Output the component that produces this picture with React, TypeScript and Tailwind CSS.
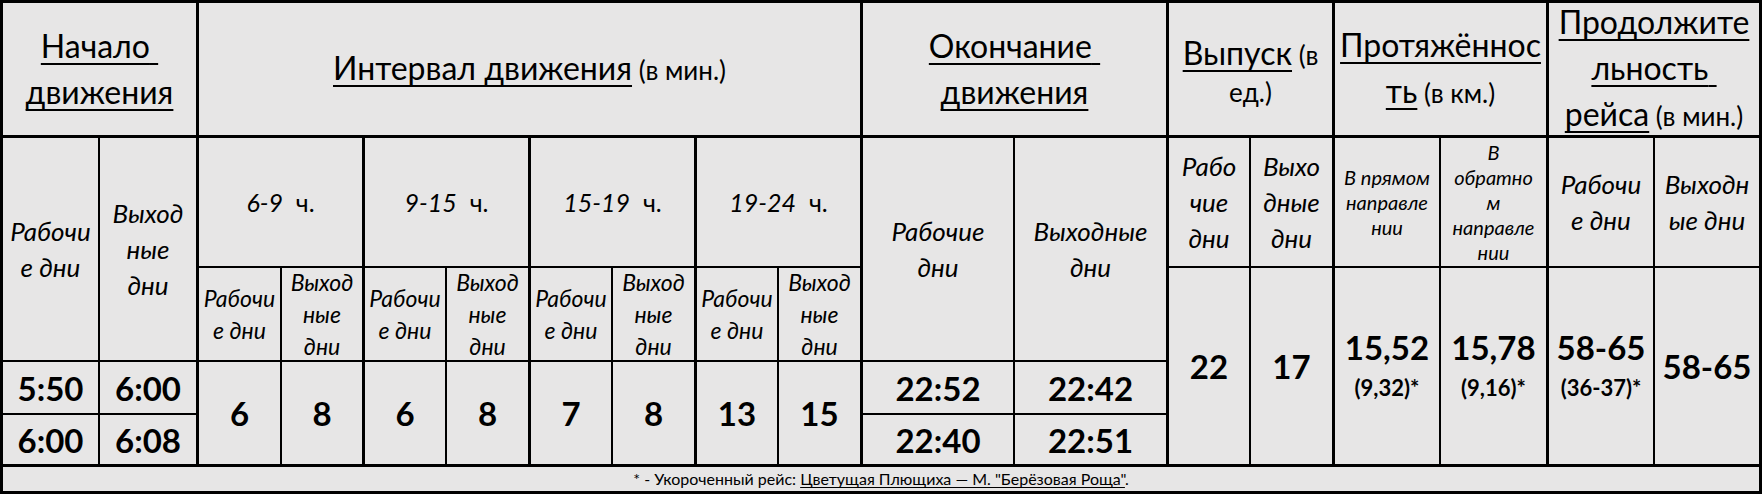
import type { ReactNode } from 'react';

function Cell({ className = '', children }: { className?: string; children?: ReactNode }) {
  return (
    <div className={`flex flex-col items-center justify-center text-center border-black overflow-visible ${className}`}>
      {children}
    </div>
  );
}

const u = 'underline decoration-2 underline-offset-[5px] [text-decoration-skip-ink:none]';

function Head({ lines }: { lines: ReactNode[] }) {
  return (
    <>
      {lines.map((l, i) => (
        <span key={i} className="block text-[32px] leading-[46px] whitespace-pre">
          {l}
        </span>
      ))}
    </>
  );
}

function Sub({ lines, size = 'big' }: { lines: string[]; size?: 'big' | 'mid' | 'small' }) {
  const cls =
    size === 'big'
      ? 'text-[26px] leading-[36px]'
      : size === 'mid'
      ? 'text-[23px] leading-[32px]'
      : 'text-[20px] leading-[25px]';
  return (
    <div className={`italic ${cls}`}>
      {lines.map((l, i) => (
        <span key={i} className="block whitespace-pre">
          {l}
        </span>
      ))}
    </div>
  );
}

function Num({ children }: { children: ReactNode }) {
  return <span className="block text-[33px] font-bold leading-[38px]">{children}</span>;
}

function Note({ children }: { children: ReactNode }) {
  return <span className="block mt-[6px] text-[22px] font-bold leading-[32px]">{children}</span>;
}

function Hours({ range }: { range: string }) {
  return (
    <span className="text-[25px] leading-[30px] whitespace-pre">
      <i>{range}</i>
      {'\u00a0\u00a0'}ч.
    </span>
  );
}

export default function App() {
  const intervals = ['6', '8', '6', '8', '7', '8', '13', '15'];
  const intervalStarts = [
    'col-start-3',
    'col-start-4',
    'col-start-5',
    'col-start-6',
    'col-start-7',
    'col-start-8',
    'col-start-9',
    'col-start-10',
  ];

  return (
    <div className="w-[1762px] h-[494px] bg-white">
      <div className="grid grid-cols-[97px_99px_83px_83px_82px_84px_82px_84px_82px_84px_152px_154px_82px_84px_106px_108px_106px_107px] grid-rows-[135px_130px_94px_53px_52px_27px] border-l-[3px] border-t-[3px] border-black bg-[#e7e6e6] text-black font-['Lato',sans-serif]">
        {/* row 1: group headers */}
        <Cell className="col-start-1 col-span-2 row-start-1 border-r-[3px] border-b-[3px]">
          <Head lines={[<span className={u}>Начало{'\u00a0'}</span>, <span className={u}>движения</span>]} />
        </Cell>
        <Cell className="col-start-3 col-span-8 row-start-1 border-r-[3px] border-b-[3px]">
          <span className="block text-[32px] leading-[46px] whitespace-pre">
            <span className={u}>Интервал движения</span>
            <span className="text-[26px]"> (в мин.)</span>
          </span>
        </Cell>
        <Cell className="col-start-11 col-span-2 row-start-1 border-r-[3px] border-b-[3px]">
          <Head lines={[<span className={u}>Окончание{'\u00a0'}</span>, <span className={u}>движения</span>]} />
        </Cell>
        <Cell className="col-start-13 col-span-2 row-start-1 border-r-[3px] border-b-[3px]">
          <span className="block text-[32px] leading-[44px] whitespace-pre">
            <span className={u}>Выпуск</span>
            <span className="text-[26px]"> (в</span>
          </span>
          <span className="block text-[26px] leading-[30px]">ед.)</span>
        </Cell>
        <Cell className="col-start-15 col-span-2 row-start-1 border-r-[3px] border-b-[3px]">
          <Head
            lines={[
              <span className={u}>Протяжённос</span>,
              <>
                <span className={u}>ть</span>
                <span className="text-[26px]"> (в км.)</span>
              </>,
            ]}
          />
        </Cell>
        <Cell className="col-start-17 col-span-2 row-start-1 border-r-[3px] border-b-[3px]">
          <Head
            lines={[
              <span className={u}>Продолжите</span>,
              <span className={u}>льность{'\u00a0'}</span>,
              <>
                <span className={u}>рейса</span>
                <span className="text-[26px]"> (в мин.)</span>
              </>,
            ]}
          />
        </Cell>

        {/* row 2: sub headers */}
        <Cell className="col-start-1 row-start-2 row-span-2 border-r-2 border-b-2">
          <Sub lines={['Рабочи', 'е дни']} />
        </Cell>
        <Cell className="col-start-2 row-start-2 row-span-2 border-r-[3px] border-b-2">
          <Sub lines={['Выход', 'ные', 'дни']} />
        </Cell>
        <Cell className="col-start-3 col-span-2 row-start-2 border-r-[3px] border-b-2">
          <Hours range="6-9" />
        </Cell>
        <Cell className="col-start-5 col-span-2 row-start-2 border-r-[3px] border-b-2">
          <Hours range="9-15" />
        </Cell>
        <Cell className="col-start-7 col-span-2 row-start-2 border-r-[3px] border-b-2">
          <Hours range="15-19" />
        </Cell>
        <Cell className="col-start-9 col-span-2 row-start-2 border-r-[3px] border-b-2">
          <Hours range="19-24" />
        </Cell>
        <Cell className="col-start-11 row-start-2 row-span-2 border-r-2 border-b-2">
          <Sub lines={['Рабочие', 'дни']} />
        </Cell>
        <Cell className="col-start-12 row-start-2 row-span-2 border-r-[3px] border-b-2">
          <Sub lines={['Выходные', 'дни']} />
        </Cell>
        <Cell className="col-start-13 row-start-2 border-r-2 border-b-2">
          <Sub lines={['Рабо', 'чие', 'дни']} />
        </Cell>
        <Cell className="col-start-14 row-start-2 border-r-[3px] border-b-2">
          <Sub lines={['Выхо', 'дные', 'дни']} />
        </Cell>
        <Cell className="col-start-15 row-start-2 border-r-2 border-b-2">
          <Sub size="small" lines={['В прямом', 'направле', 'нии']} />
        </Cell>
        <Cell className="col-start-16 row-start-2 border-r-[3px] border-b-2">
          <Sub size="small" lines={['В', 'обратно', 'м', 'направле', 'нии']} />
        </Cell>
        <Cell className="col-start-17 row-start-2 border-r-2 border-b-2">
          <Sub lines={['Рабочи', 'е дни']} />
        </Cell>
        <Cell className="col-start-18 row-start-2 border-r-[3px] border-b-2">
          <Sub lines={['Выходн', 'ые дни']} />
        </Cell>

        {/* row 3: interval day types */}
        {intervalStarts.map((c, i) => (
          <Cell
            key={c}
            className={`${c} row-start-3 border-b-2 ${i % 2 === 0 ? 'border-r-2' : 'border-r-[3px]'}`}
          >
            <Sub size="mid" lines={i % 2 === 0 ? ['Рабочи', 'е дни'] : ['Выход', 'ные', 'дни']} />
          </Cell>
        ))}

        {/* tall value cells */}
        <Cell className="col-start-13 row-start-3 row-span-3 border-r-2 border-b-[3px]">
          <Num>22</Num>
        </Cell>
        <Cell className="col-start-14 row-start-3 row-span-3 border-r-[3px] border-b-[3px]">
          <Num>17</Num>
        </Cell>
        <Cell className="col-start-15 row-start-3 row-span-3 border-r-2 border-b-[3px]">
          <Num>15,52</Num>
          <Note>(9,32)*</Note>
        </Cell>
        <Cell className="col-start-16 row-start-3 row-span-3 border-r-[3px] border-b-[3px]">
          <Num>15,78</Num>
          <Note>(9,16)*</Note>
        </Cell>
        <Cell className="col-start-17 row-start-3 row-span-3 border-r-2 border-b-[3px]">
          <Num>58-65</Num>
          <Note>(36-37)*</Note>
        </Cell>
        <Cell className="col-start-18 row-start-3 row-span-3 border-r-[3px] border-b-[3px]">
          <Num>58-65</Num>
        </Cell>

        {/* rows 4-5: times and intervals */}
        <Cell className="col-start-1 row-start-4 border-r-2 border-b-2">
          <Num>5:50</Num>
        </Cell>
        <Cell className="col-start-2 row-start-4 border-r-[3px] border-b-2">
          <Num>6:00</Num>
        </Cell>
        <Cell className="col-start-1 row-start-5 border-r-2 border-b-[3px]">
          <Num>6:00</Num>
        </Cell>
        <Cell className="col-start-2 row-start-5 border-r-[3px] border-b-[3px]">
          <Num>6:08</Num>
        </Cell>
        {intervalStarts.map((c, i) => (
          <Cell
            key={'v' + c}
            className={`${c} row-start-4 row-span-2 border-b-[3px] ${i % 2 === 0 ? 'border-r-2' : 'border-r-[3px]'}`}
          >
            <Num>{intervals[i]}</Num>
          </Cell>
        ))}
        <Cell className="col-start-11 row-start-4 border-r-2 border-b-2">
          <Num>22:52</Num>
        </Cell>
        <Cell className="col-start-12 row-start-4 border-r-[3px] border-b-2">
          <Num>22:42</Num>
        </Cell>
        <Cell className="col-start-11 row-start-5 border-r-2 border-b-[3px]">
          <Num>22:40</Num>
        </Cell>
        <Cell className="col-start-12 row-start-5 border-r-[3px] border-b-[3px]">
          <Num>22:51</Num>
        </Cell>

        {/* footer note */}
        <Cell className="col-start-1 col-span-18 row-start-6 border-r-[3px] border-b-[3px]">
          <span className="text-[16px] leading-[20px] whitespace-pre">
            * - Укороченный рейс:{' '}
            <span className="underline decoration-1 underline-offset-2 [text-decoration-skip-ink:none]">
              Цветущая Плющиха — М. "Берёзовая Роща"
            </span>
            .
          </span>
        </Cell>
      </div>
    </div>
  );
}
